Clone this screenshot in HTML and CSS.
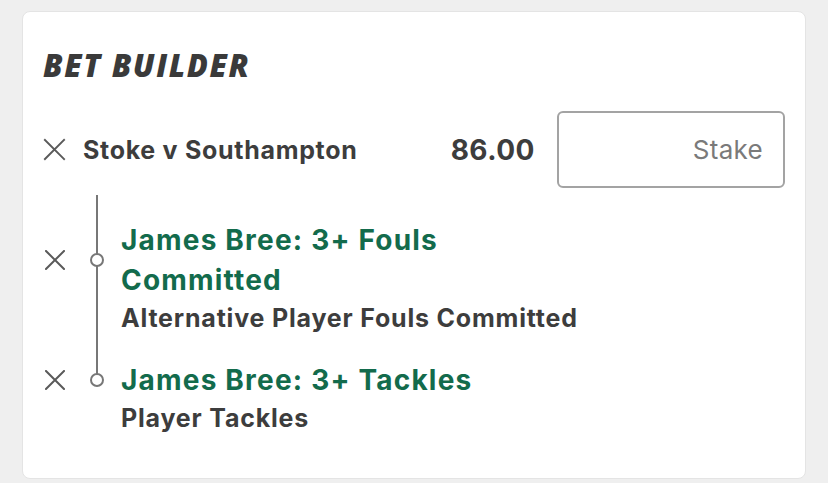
FILE: index.html
```html
<!DOCTYPE html>
<html lang="en">
<head>
<meta charset="utf-8">
<title>Bet Builder</title>
<link rel="stylesheet" href="styles.css">
</head>
<body>
<section class="card">
  <h2 class="title">BET BUILDER</h2>
  <div class="bet-row">
    <button class="remove" aria-label="Remove">
      <svg viewBox="0 0 24 24" width="23" height="23"><path d="M2 2 L22 22 M22 2 L2 22" stroke="#5a5a5a" stroke-width="2" fill="none" stroke-linecap="square"/></svg>
    </button>
    <span class="event">Stoke v Southampton</span>
    <span class="odds">86.00</span>
    <input class="stake" type="text" placeholder="Stake">
  </div>
  <ul class="legs">
    <li class="leg">
      <button class="remove leg-remove" aria-label="Remove">
        <svg viewBox="0 0 20 20" width="20" height="20"><path d="M1 1 L19 19 M19 1 L1 19" stroke="#5a5a5a" stroke-width="2" fill="none" stroke-linecap="square"/></svg>
      </button>
      <span class="node"></span>
      <div class="leg-title">James Bree: 3+ Fouls Committed</div>
      <div class="leg-market">Alternative Player Fouls Committed</div>
    </li>
    <li class="leg">
      <button class="remove leg-remove" aria-label="Remove">
        <svg viewBox="0 0 20 20" width="20" height="20"><path d="M1 1 L19 19 M19 1 L1 19" stroke="#5a5a5a" stroke-width="2" fill="none" stroke-linecap="square"/></svg>
      </button>
      <span class="node"></span>
      <div class="leg-title">James Bree: 3+ Tackles</div>
      <div class="leg-market">Player Tackles</div>
    </li>
  </ul>
</section>
</body>
</html>
```

FILE: styles.css
```css
* { box-sizing: border-box; }

body {
  margin: 0;
  padding: 11px 22px 5px 22px;
  background: #efefef;
  font-family: Inter, "Liberation Sans", Arial, sans-serif;
  color: #3d3d3d;
}

.card {
  background: #ffffff;
  border: 1px solid #e4e4e4;
  border-radius: 8px;
  padding: 35px 20px 44px 20px;
}

.title {
  margin: 0;
  font-family: "Open Sans", Lato, sans-serif;
  font-weight: 800;
  font-style: italic;
  font-size: 31px;
  line-height: 36px;
  color: #3a3a3a;
  letter-spacing: 1.6px;
}

.bet-row {
  display: flex;
  align-items: center;
  margin-top: 28px;
}

.remove {
  border: 0;
  background: none;
  padding: 0;
  display: flex;
  align-items: center;
  justify-content: center;
  cursor: pointer;
}

.bet-row .remove {
  width: 23px;
  height: 23px;
  margin-right: 17px;
}

.event {
  flex: 1;
  font-size: 25px;
  letter-spacing: 0.7px;
  font-weight: 700;
  color: #3d3d3d;
}

.odds {
  font-size: 28px;
  letter-spacing: 0.5px;
  font-weight: 700;
  color: #3d3d3d;
  margin-right: 22px;
}

.stake {
  width: 228px;
  height: 77px;
  border: 2px solid #a3a3a3;
  border-radius: 6px;
  padding: 0 20px;
  font-family: Inter, "Liberation Sans", Arial, sans-serif;
  font-size: 26px;
  letter-spacing: 0.3px;
  text-align: right;
  color: #3d3d3d;
  background: #fff;
  outline: none;
}

.stake::placeholder {
  color: #7a7a7a;
}

.legs {
  list-style: none;
  margin: 7px 0 0 0;
  padding: 25px 0 0 0;
  position: relative;
  display: flex;
  flex-direction: column;
  gap: 26px;
}

.legs::before {
  content: "";
  position: absolute;
  left: 53px;
  top: 0;
  bottom: 54px;
  width: 2px;
  background: #777;
}

.leg {
  display: grid;
  grid-template-columns: 24px 54px 1fr;
  grid-template-rows: auto auto;
}

.leg-remove {
  grid-column: 1;
  grid-row: 1;
  align-self: center;
  width: 24px;
  height: 24px;
}

.node {
  grid-column: 2;
  grid-row: 1;
  align-self: center;
  width: 14px;
  height: 14px;
  margin-left: 23px;
  border: 2px solid #777;
  border-radius: 50%;
  background: #fff;
  position: relative;
  z-index: 1;
}

.leg-title {
  grid-column: 3;
  grid-row: 1;
  max-width: 420px;
  font-size: 28px;
  letter-spacing: 1.2px;
  line-height: 40px;
  font-weight: 700;
  color: #136b4c;
}

.leg-market {
  grid-column: 3;
  grid-row: 2;
  margin-top: 2px;
  font-size: 25px;
  letter-spacing: 0.8px;
  line-height: 32px;
  font-weight: 700;
  color: #3d3d3d;
}
```
